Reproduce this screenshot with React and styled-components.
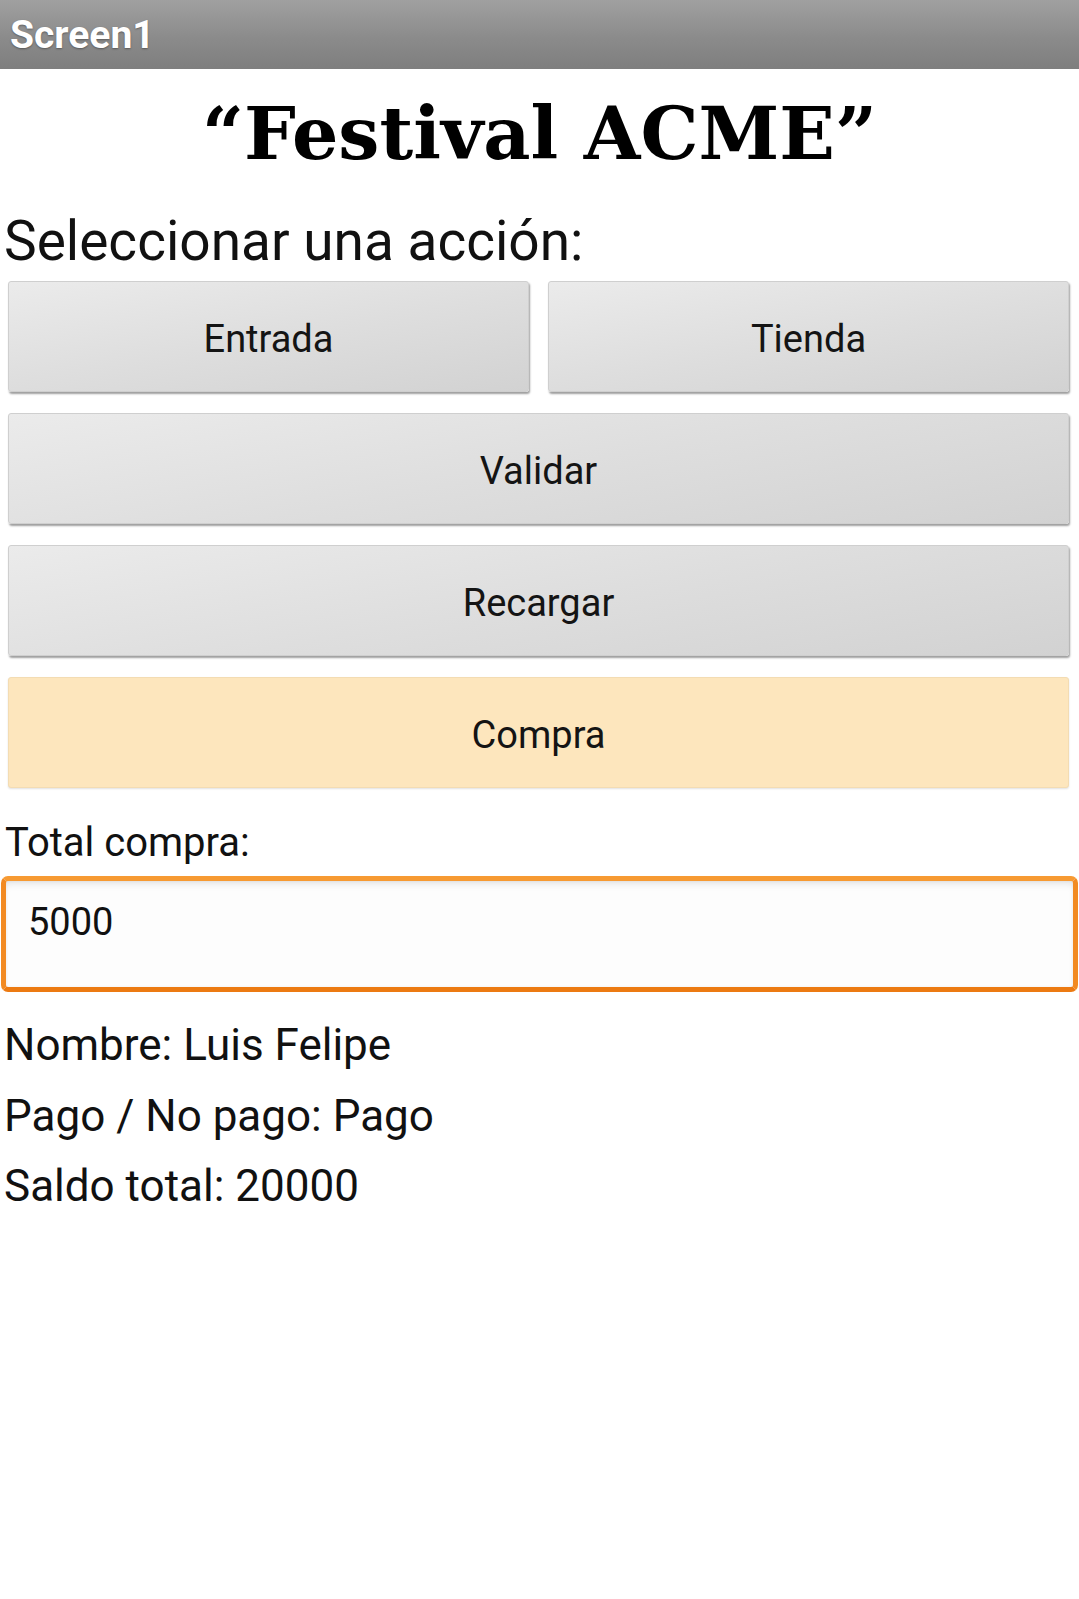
import React from "react";
import styled, { createGlobalStyle } from "styled-components";

const Global = createGlobalStyle`
  html, body { margin: 0; padding: 0; background: #ffffff; }
  body { font-family: Roboto, "Noto Sans", sans-serif; color: #111; }
  * { box-sizing: border-box; }
`;

const Screen = styled.div`
  width: 1079px;
  min-height: 1599px;
  background: #fff;
  display: flex;
  flex-direction: column;
`;

const TitleBar = styled.header`
  height: 69px;
  background: linear-gradient(to bottom, #a0a0a0 0%, #8b8b8b 55%, #7e7e7e 100%);
  display: flex;
  align-items: center;
  padding-left: 10px;
  color: #fff;
  font-family: Roboto, sans-serif;
  font-weight: 700;
  font-size: 39px;
  text-shadow: 0 1px 2px rgba(0, 0, 0, 0.35);
`;

const Heading = styled.h1`
  margin: 0;
  text-align: center;
  font-family: "DejaVu Serif", "Liberation Serif", serif;
  font-weight: 700;
  font-size: 73px;
  line-height: 128px;
  color: #000;
`;

const Prompt = styled.div`
  margin: 14px 0 10px 4px;
  font-size: 55px;
  line-height: 60px;
  color: #111;
`;

const ButtonStack = styled.div`
  display: flex;
  flex-direction: column;
  gap: 21px;
  padding: 0 10px 0 8px;
`;

const ButtonRow = styled.div`
  display: grid;
  grid-template-columns: repeat(${(p) => p.$cols}, 1fr);
  gap: 19px;
`;

const ActionButton = styled.button`
  height: 111px;
  border: 1px solid ${(p) => (p.$accent ? "#f3dcb3" : "#cfcfcf")};
  border-radius: 3px;
  background: ${(p) =>
    p.$accent
      ? "#fde6bd"
      : "linear-gradient(170deg, #ebebeb 0%, #dedede 50%, #d2d2d2 100%)"};
  box-shadow: ${(p) =>
    p.$accent
      ? "0 1px 2px rgba(0,0,0,0.12)"
      : "1px 2px 2px rgba(0,0,0,0.38)"};
  font-family: Roboto, sans-serif;
  font-size: 38px;
  padding: 4px 0 0 0;
  color: #141414;
  cursor: pointer;
`;

const FieldLabel = styled.div`
  margin: 31px 0 9px 5px;
  font-size: 40px;
  line-height: 48px;
  color: #111;
`;

const AmountField = styled.div`
  margin: 0 1px 0 1px;
  height: 116px;
  border: 5px solid #f28a22;
  border-top-color: #f79a32;
  border-bottom-color: #ec7a12;
  border-radius: 7px;
  background: #fdfdfd;
  box-shadow: inset 0 6px 8px -4px rgba(0, 0, 0, 0.12), inset 0 0 3px rgba(0,0,0,0.06);
  padding: 19px 0 0 22px;
  font-size: 38px;
  line-height: 44px;
  color: #111;
`;

const InfoList = styled.div`
  margin: 18px 0 0 4px;
  display: flex;
  flex-direction: column;
`;

const InfoLine = styled.div`
  font-size: 44px;
  line-height: 70.5px;
  color: #111;
`;

export default function App() {
  return (
    <>
      <Global />
      <Screen>
        <TitleBar>Screen1</TitleBar>
        <Heading>“Festival ACME”</Heading>
        <Prompt>Seleccionar una acción:</Prompt>
        <ButtonStack>
          <ButtonRow $cols={2}>
            <ActionButton>Entrada</ActionButton>
            <ActionButton>Tienda</ActionButton>
          </ButtonRow>
          <ButtonRow $cols={1}>
            <ActionButton>Validar</ActionButton>
          </ButtonRow>
          <ButtonRow $cols={1}>
            <ActionButton>Recargar</ActionButton>
          </ButtonRow>
          <ButtonRow $cols={1}>
            <ActionButton $accent>Compra</ActionButton>
          </ButtonRow>
        </ButtonStack>
        <FieldLabel>Total compra:</FieldLabel>
        <AmountField>5000</AmountField>
        <InfoList>
          <InfoLine>Nombre: Luis Felipe</InfoLine>
          <InfoLine>Pago / No pago: Pago</InfoLine>
          <InfoLine>Saldo total: 20000</InfoLine>
        </InfoList>
      </Screen>
    </>
  );
}
